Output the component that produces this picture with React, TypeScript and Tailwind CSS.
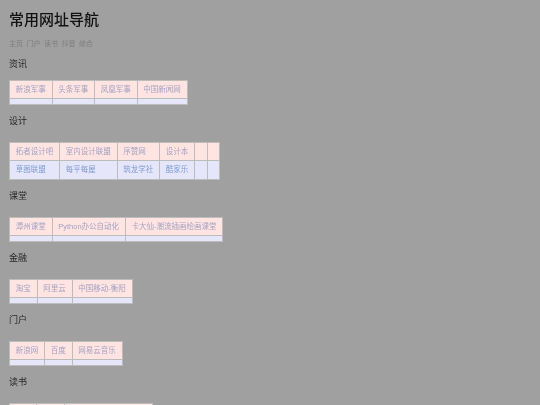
import React from 'react';

type Section = {
  title: string;
  rows: string[][];
  // widths for the row that only peeks in at the page bottom
  widths?: string[];
};

const sections: Section[] = [
  { title: '资讯', rows: [['新浪军事', '头条军事', '凤凰军事', '中国新闻网'], ['', '', '', '']] },
  {
    title: '设计',
    rows: [
      ['拓者设计吧', '室内设计联盟', '序赞网', '设计本', '', ''],
      ['草图联盟', '每平每屋', '筑龙学社', '酷家乐', '', ''],
    ],
  },
  { title: '课堂', rows: [['潭州课堂', 'Python办公自动化', '卡大仙-潮流插画绘画课堂'], ['', '', '']] },
  { title: '金融', rows: [['淘宝', '阿里云', '中国移动-衡阳'], ['', '', '']] },
  { title: '门户', rows: [['新浪网', '百度', '网易云音乐'], ['', '', '']] },
  { title: '读书', rows: [['', '', '']], widths: ['w-[27px]', 'w-[28px]', 'w-[88px]'] },
];

const LinkTable = ({ rows, widths }: { rows: string[][]; widths?: string[] }) => (
  <table className="border-collapse">
    <tbody>
      {rows.map((row, i) => (
        <tr
          key={i}
          className={`${i % 2 === 0 ? 'bg-[#ffe4e1]' : 'bg-[#e6e6fa]'} ${i === 1 && row[0] ? 'h-[19px]' : ''}`}
        >
          {row.map((cell, j) => (
            <td
              key={j}
              className={`border border-[#bcbcbc] px-[5.75px] py-[2.5px] text-left text-[7.5px] ${
                i % 2 === 0 ? 'text-[#a3a3c4]' : 'text-[#7f9ccf]'
              } ${cell ? 'leading-[12px]' : 'leading-[0px]'} ${widths ? widths[j] : ''}`}
            >
              {cell}
            </td>
          ))}
        </tr>
      ))}
    </tbody>
  </table>
);

export default function App() {
  return (
    <div className="h-[405px] overflow-hidden bg-[#a0a0a0] px-[9px] pt-[11px] font-['Liberation_Sans','Noto_Sans_CJK_SC',sans-serif] blur-[0.35px]">
      <h1 className="text-[15px] leading-[18px] font-medium text-[#111111]">常用网址导航</h1>
      <nav className="mt-[10px] flex gap-[3.5px] text-[7px] leading-[10px] text-[#7d7d7d]">
        <span>主页</span>
        <span>门户</span>
        <span>读书</span>
        <span>抖音</span>
        <span>综合</span>
      </nav>
      {sections.map((section, i) => (
        <section key={section.title}>
          <h2
            className={`text-[9px] leading-[12px] text-[#262626] ${
              i === 0 ? 'mt-[9px] mb-[10px]' : 'mt-[10px] mb-[15px]'
            }`}
          >
            {section.title}
          </h2>
          <LinkTable rows={section.rows} widths={section.widths} />
        </section>
      ))}
    </div>
  );
}
